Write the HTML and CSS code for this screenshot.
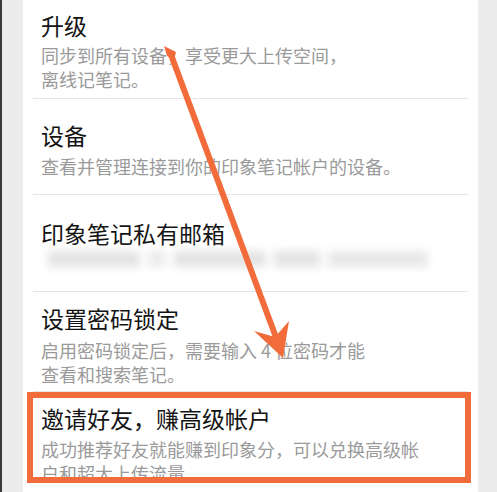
FILE: index.html
```html
<!DOCTYPE html>
<html lang="zh-CN">
<head>
  <meta charset="UTF-8" />
  <meta name="viewport" content="width=device-width, initial-scale=1.0"/>
  <title>设置</title>
  <link rel="stylesheet" href="styles.css">
</head>
<body>
  <div class="card">
    <div class="item item-upgrade">
      <h2 class="item-title">升级</h2>
      <p class="item-desc">同步到所有设备，享受更大上传空间，<br>离线记笔记。</p>
    </div>
    <div class="item item-devices">
      <h2 class="item-title">设备</h2>
      <p class="item-desc">查看并管理连接到你的印象笔记帐户的设备。</p>
    </div>
    <div class="item item-mail">
      <h2 class="item-title">印象笔记私有邮箱</h2>
      <!-- address is blurred out in the screenshot -->
      <div class="blur-row">
        <span class="blur-seg seg-a"></span>
        <span class="blur-seg seg-b"></span>
        <span class="blur-seg seg-c"></span>
        <span class="blur-seg seg-d"></span>
        <span class="blur-seg seg-e"></span>
      </div>
    </div>
    <div class="item item-lock">
      <h2 class="item-title">设置密码锁定</h2>
      <p class="item-desc">启用密码锁定后，需要输入 4 位密码才能<br>查看和搜索笔记。</p>
    </div>
    <div class="item item-invite">
      <h2 class="item-title">邀请好友，赚高级帐户</h2>
      <p class="item-desc">成功推荐好友就能赚到印象分，可以兑换高级帐<br>户和超大上传流量。</p>
    </div>
  </div>

  <!-- annotation drawn over the screenshot -->
  <div class="mark-box"></div>
  <svg class="mark-arrow" width="497" height="492" viewBox="0 0 497 492">
    <polygon points="164,46 176,52 174,60 167,56" fill="#f26b3b"/>
    <line x1="170" y1="52" x2="277" y2="340" stroke="#f26b3b" stroke-width="6"/>
    <polygon points="283,358 254,331 275,337 289,321" fill="#f26b3b"/>
  </svg>
</body>
</html>
```

FILE: styles.css
```css
* {
  margin: 0;
  padding: 0;
  box-sizing: border-box;
}

body {
  font-family: "Noto Sans CJK SC", "Noto Sans", sans-serif;
  background: #ececec;
  border-left: 2px solid #3a3a3a;
  height: 492px;
  overflow: hidden;
  position: relative;
}

.card {
  margin-left: 21px;
  width: 455px;
  height: 492px;
  background: #fff;
  padding: 0 10px;
  overflow: hidden;
}

.item {
  padding-left: 8px;
  border-bottom: 1px solid #e6e6e6;
}

.item-title {
  font-size: 23px;
  font-weight: 400;
  line-height: 28px;
  color: #141414;
}

.item-desc {
  font-size: 18px;
  line-height: 24px;
  color: #9a9a9a;
}

.item-upgrade { padding: 11px 0 7px 8px; }
.item-upgrade .item-desc { margin-top: 4px; }

.item-devices { padding: 22px 0 16px 8px; }
.item-devices .item-desc { margin-top: 5px; }

.item-mail { padding: 24px 0 20px 8px; }

.item-lock { padding: 12px 0 5px 8px; }
.item-lock .item-desc { margin-top: 6px; }

.item-invite { padding: 12px 0 10px 8px; border-bottom: none; }
.item-invite .item-desc { margin-top: 5px; }

.blur-row {
  display: flex;
  align-items: center;
  gap: 8px;
  height: 24px;
  padding-left: 7px;
  filter: blur(4px);
}

.blur-seg {
  height: 16px;
  background: #e3e3e3;
}

.seg-a { width: 92px; }
.seg-b { width: 18px; background: #ebebeb; }
.seg-c { width: 92px; }
.seg-d { width: 46px; }
.seg-e { width: 100px; background: #e8e8e8; }

.mark-box {
  position: absolute;
  left: 25px;
  top: 392px;
  width: 444px;
  height: 91px;
  border: 6px solid #f26b3b;
}

.mark-arrow {
  position: absolute;
  left: -2px;
  top: 0;
}
```
